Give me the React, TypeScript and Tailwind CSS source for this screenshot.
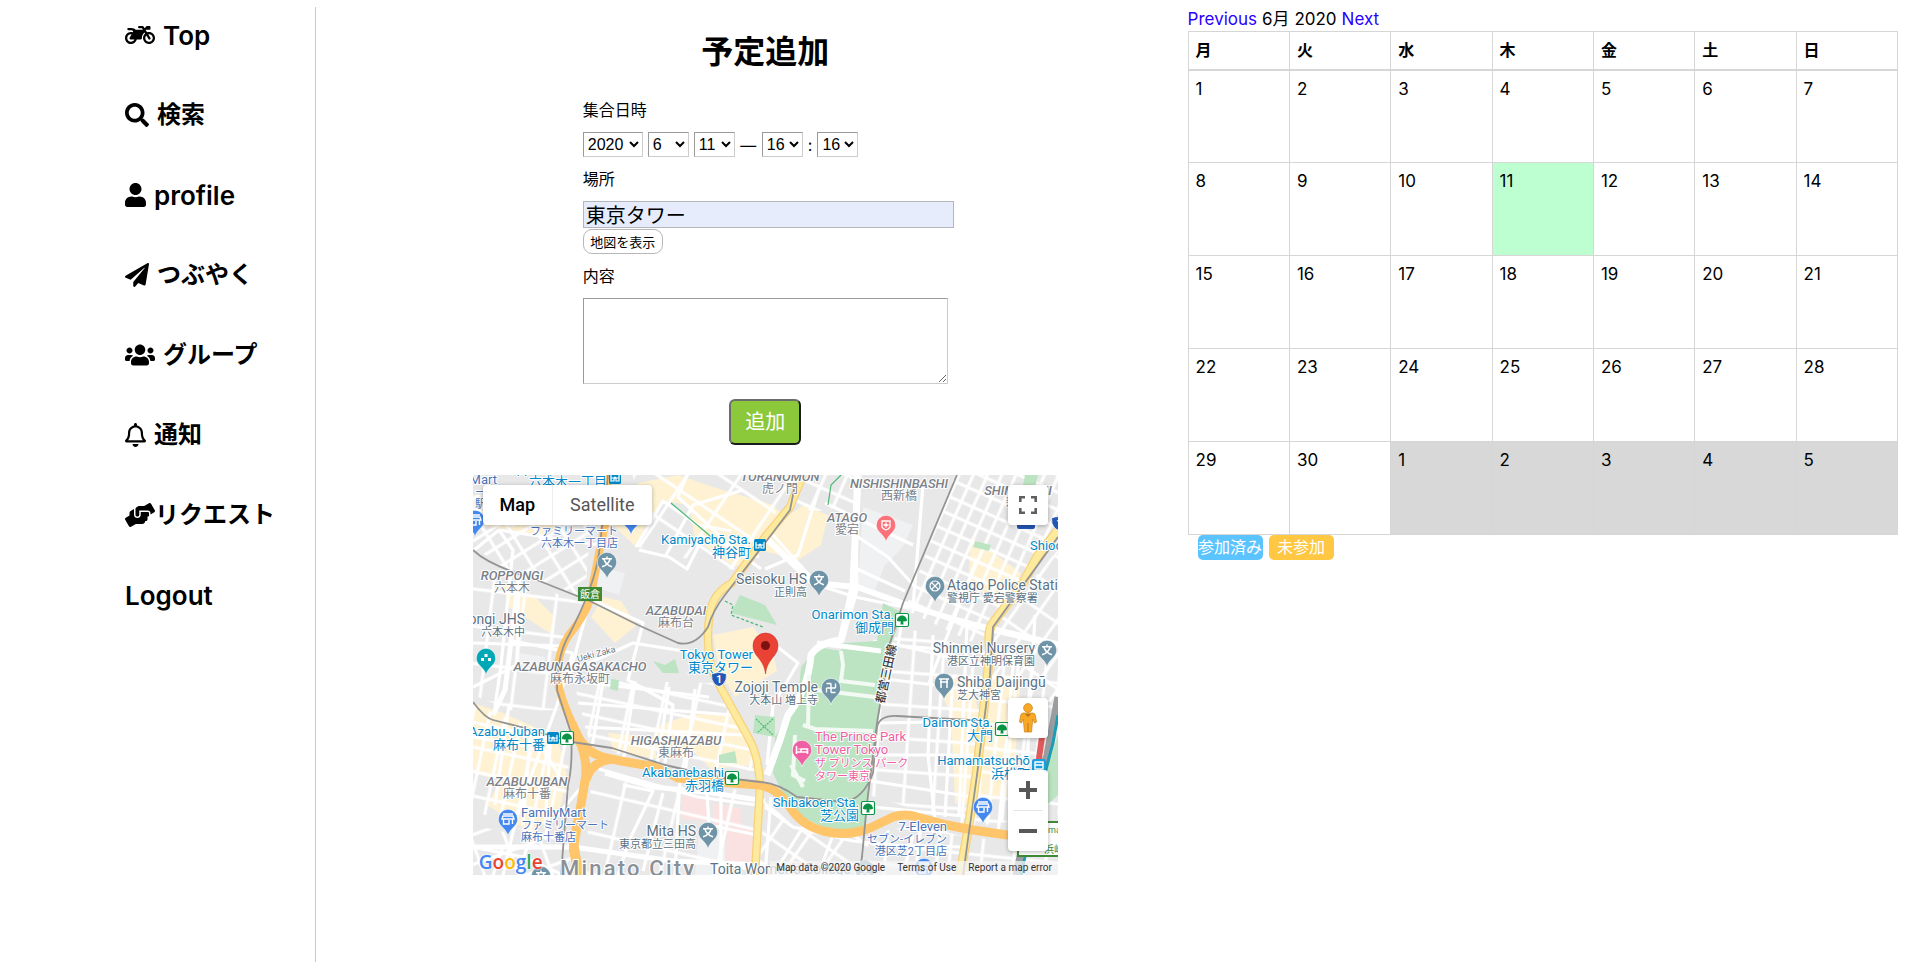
import type { ComponentType, ReactNode } from "react";
import {
  FaMotorcycle,
  FaSearch,
  FaUser,
  FaPaperPlane,
  FaUsers,
  FaRegBell,
  FaHandsHelping,
} from "react-icons/fa";

type NavItem = {
  label: string;
  icon?: ComponentType<{ className?: string }>;
  iconWidth?: string;
  tight?: boolean;
  latin?: boolean;
};

const navItems: NavItem[] = [
  { label: "Top", icon: FaMotorcycle, iconWidth: "w-[30px]", latin: true },
  { label: "検索", icon: FaSearch, iconWidth: "w-[24px]" },
  { label: "profile", icon: FaUser, iconWidth: "w-[21px]", latin: true },
  { label: "つぶやく", icon: FaPaperPlane, iconWidth: "w-[24px]" },
  { label: "グループ", icon: FaUsers, iconWidth: "w-[30px]" },
  { label: "通知", icon: FaRegBell, iconWidth: "w-[21px]" },
  { label: "リクエスト", icon: FaHandsHelping, iconWidth: "w-[30px]", tight: true },
  { label: "Logout", latin: true },
];

function Sidebar() {
  return (
    <nav className="mt-[7px] w-[316px] shrink-0 border-r border-[#cccccc] pl-[125px]">
      <ul>
        {navItems.map(({ label, icon: Icon, iconWidth, tight, latin }) => (
          <li key={label} className="mb-6 h-14">
            <a
              href="#"
              className={`flex h-14 items-center whitespace-nowrap font-semibold text-black ${latin ? "text-[26px]" : "text-2xl"} ${tight ? "gap-0" : "gap-2"}`}
            >
              {Icon && <Icon className={`h-6 shrink-0 ${iconWidth}`} />}
              {label}
            </a>
          </li>
        ))}
      </ul>
    </nav>
  );
}

/* ---------- Form ---------- */

const inset = "border border-t-[#9a9a9a] border-l-[#9a9a9a] border-r-[#cccccc] border-b-[#cccccc]";

function DateSelect({ label, value, wide }: { label: string; value: string; wide?: boolean }) {
  return (
    <select
      aria-label={label}
      defaultValue={value}
      className={`h-[25px] bg-white font-['Liberation_Sans',Arial,sans-serif] text-base text-black ${inset} ${wide ? "w-[60px]" : "w-[41px]"}`}
    >
      <option>{value}</option>
    </select>
  );
}

function ScheduleForm() {
  return (
    <form className="w-[365px] text-base leading-6" onSubmit={(e) => e.preventDefault()}>
      <fieldset>
        <legend className="mb-[10px]">集合日時</legend>
        <div className="flex h-[25px] items-center gap-[5px]">
          <DateSelect label="年" value="2020" wide />
          <DateSelect label="月" value="6" />
          <DateSelect label="日" value="11" />
          <span className="w-[17px] text-center">—</span>
          <DateSelect label="時" value="16" />
          <span>:</span>
          <DateSelect label="分" value="16" />
        </div>
      </fieldset>
      <label htmlFor="place" className="my-[10px] block">
        場所
      </label>
      <input
        id="place"
        type="text"
        defaultValue="東京タワー"
        className="block h-[27px] w-[371px] border border-[#b4b6bd] bg-[#e6ecfc] px-[2px] text-xl leading-6"
      />
      <button
        type="button"
        className="mt-px block h-[25px] w-[80px] rounded-[9px] border border-[#b8b8b8] bg-white text-[13px] leading-5"
      >
        地図を表示
      </button>
      <label htmlFor="content" className="my-[10px] block">
        内容
      </label>
      <textarea id="content" className={`block h-[86px] w-full resize bg-white ${inset}`} />
      <button
        type="submit"
        className="mx-auto mt-[15px] block h-[46px] w-[72px] rounded-md border-2 border-t-[#6c6c6c] border-r-[#1c1c1c] border-b-[#1c1c1c] border-l-[#6c6c6c] bg-[#8bc93b] text-xl text-white"
      >
        追加
      </button>
    </form>
  );
}

/* ---------- Map ---------- */

const mapFont = "Roboto, 'Noto Sans CJK JP', sans-serif";

type Tone = "area" | "station" | "place" | "shop" | "hotel";

const tones: Record<Tone, { color: string; latin: number; kanji: number; leading: number }> = {
  area: { color: "#7b8087", latin: 13, kanji: 12, leading: 12 },
  station: { color: "#0288c7", latin: 13, kanji: 13, leading: 13 },
  place: { color: "#5b7282", latin: 14, kanji: 11, leading: 12 },
  shop: { color: "#4a73b8", latin: 13, kanji: 11, leading: 12 },
  hotel: { color: "#ee5fa3", latin: 13, kanji: 11, leading: 13 },
};

type MapLabelProps = {
  x: number;
  y: number;
  tone: Tone;
  lines: string[];
  anchor?: "start" | "middle" | "end";
};

function MapLabel({ x, y, tone, lines, anchor = "end" }: MapLabelProps) {
  const isArea = tone === "area";
  const { color, latin: latinSize, kanji: kanjiSize, leading } = tones[tone];
  return (
    <g
      fontFamily={mapFont}
      fill={color}
      stroke="#ffffff"
      strokeWidth="2"
      strokeLinejoin="round"
      paintOrder="stroke"
      textAnchor={anchor}
    >
      {lines.map((line, i) => {
        const latin = line.charCodeAt(0) < 0x400 && !/[\u3040-\u9fff]/.test(line);
        return (
          <text
            key={i}
            x={x}
            y={y + i * leading}
            fontSize={latin ? latinSize : kanjiSize}
            fontWeight={isArea && latin ? 500 : 400}
            fontStyle={isArea && latin ? "italic" : "normal"}
          >
            {line}
          </text>
        );
      })}
    </g>
  );
}

function Pin({ x, y, color, children }: { x: number; y: number; color: string; children?: ReactNode }) {
  return (
    <g transform={`translate(${x} ${y})`}>
      <path
        d="M0 17C-1 12.500-3.500 10.500-6.500 7.200C-8.800 4.700-9.700 2.600-9.700 0A9.700 9.700 0 0 1 9.700 0C9.700 2.600 8.800 4.700 6.500 7.200C3.500 10.500 1 12.500 0 17Z"
        fill={color}
        stroke="#fff"
        strokeWidth="0.6"
      />
      {children}
    </g>
  );
}

function SchoolPin({ x, y }: { x: number; y: number }) {
  return (
    <Pin x={x} y={y} color="#6f93a7">
      <path d="M0-5.500v2M-5-3.300H5M-3-2.800C-2 1 1 3.500 5 4.800M3-2.800C2 1-1 3.500-5 4.800" fill="none" stroke="#fff" strokeWidth="1.500" />
    </Pin>
  );
}

function ShopPin({ x, y }: { x: number; y: number }) {
  return (
    <Pin x={x} y={y} color="#4388ee">
      <path d="M-5-5H5M-5-3H5L6 0H-6ZM-4.500 0V5H1V1M4.500 0V5" fill="none" stroke="#fff" strokeWidth="1.400" />
    </Pin>
  );
}

function ToeiMark({ x, y }: { x: number; y: number }) {
  return (
    <g transform={`translate(${x} ${y})`}>
      <rect x="-6.500" y="-6.500" width="13" height="13" rx="1.500" fill="#fff" stroke="#0b9446" strokeWidth="1.200" />
      <path d="M0-4.500C3-4.500 5-2 5 .8C3.500 1.600 2 1.600 1.200 1.200L1.600 4.500H-1.600L-1.200 1.200C-2 1.600-3.500 1.600-5 .8C-5-2-3-4.500 0-4.500Z" fill="#0b9446" />
    </g>
  );
}

function MetroMark({ x, y }: { x: number; y: number }) {
  return (
    <g transform={`translate(${x} ${y})`}>
      <rect x="-6" y="-6" width="12" height="12" rx="1.500" fill="#0288c7" />
      <path d="M-4-3V3H-1V0H-4M4-3V3H1V0H4M-1-1L0 0L1-1" fill="none" stroke="#fff" strokeWidth="1.200" />
    </g>
  );
}

function RouteShield({ x, y }: { x: number; y: number }) {
  return (
    <g transform={`translate(${x} ${y})`}>
      <path d="M-7.500-5Q-4-6.500 0-6.500T7.500-5Q8 1 4.500 5Q2 7 0 7.500Q-2 7-4.500 5Q-8 1-7.500-5Z" fill="#2456b3" stroke="#fff" strokeWidth="0.800" />
      <text y="4" fontSize="10" fontWeight="700" fill="#fff" textAnchor="middle" fontFamily={mapFont}>
        1
      </text>
    </g>
  );
}

const streetGrids = [
  { id: "north-east", points: "350,0 585,0 585,60 520,148 505,170 432,135 482,0", angle: 24, w: 13, h: 16 },
  { id: "north", points: "325,0 380,0 384,28 348,36 318,34", angle: 24, w: 20, h: 22 },
  { id: "east", points: "520,150 585,75 585,230 512,205", angle: 35, w: 20, h: 27 },
  { id: "shiba", points: "424,150 514,178 504,295 492,350 396,320 405,245", angle: 4, w: 30, h: 33 },
  { id: "hamamatsu", points: "518,185 585,190 585,340 497,352", angle: 6, w: 14, h: 24 },
  { id: "roppongi", points: "0,20 120,20 112,122 30,92 0,72", angle: -32, w: 22, h: 18 },
  { id: "torii", points: "160,0 322,0 292,58 260,95 165,72", angle: 34, w: 44, h: 35 },
  { id: "nagasaka", points: "0,88 115,130 84,190 87,235 40,236 0,220", angle: 7, w: 32, h: 37 },
  { id: "juban", points: "0,230 95,266 96,320 85,370 0,335", angle: 12, w: 16, h: 24 },
  { id: "higashi", points: "100,205 240,208 272,262 284,296 205,294 118,272", angle: 12, w: 33, h: 19 },
  { id: "mita", points: "118,305 284,316 282,400 112,400", angle: 13, w: 54, h: 40 },
  { id: "south", points: "292,325 325,355 398,362 386,400 286,400", angle: 35, w: 30, h: 25 },
  { id: "south-east", points: "402,358 440,350 495,362 585,372 585,400 390,400", angle: 6, w: 32, h: 19 },
  { id: "minato", points: "0,350 98,372 98,400 0,400", angle: -20, w: 32, h: 28 },
];

const yellowBlocks = [
  "0,20 48,30 90,50 66,62 40,55 0,50",
  "140,50 165,8 205,0 240,12 300,30 315,45 285,80 262,92 222,64 216,30 190,26 172,52 163,72",
  "130,122 148,126 164,150 142,168 118,142",
  "30,110 60,120 82,142 80,160 36,132",
  "0,228 30,238 84,262 94,300 88,330 60,360 38,345 14,330 28,305 0,298",
  "135,258 180,262 184,284 140,276",
  "216,240 258,238 278,262 280,290 238,294 222,278 180,276 182,252",
  "240,160 280,152 300,178 304,196 262,222 246,196",
  "330,30 355,40 348,70 325,85 290,76 300,52",
  "460,200 500,205 510,270 494,330 482,328 478,240",
  "520,200 548,200 540,320 504,328",
  "498,62 548,98 535,130 495,110",
];

const minorRoads = [
  "M0 34L40 50L84 18L128 25M30 400L44 340L84 230L100 178",
  "M26 55L40 75L28 190L22 232M0 76L26 55L126 70",
  "M166 75L196 82L214 94L230 62L286 82M214 0L205 22L262 75L288 94",
  "M163 72L190 26L225 50L258 56M119 125L170 148L155 205L200 230L192 288",
  "M192 82L220 30L270 15M115 132L96 202M90 200L160 168L236 180",
  "M46 103L44 190L0 212M0 168L90 171M40 166L100 178",
  "M0 262L70 274L92 310M36 230L22 330M58 252L50 350M78 258L72 350",
  "M100 206L236 222M105 228L260 240M112 252L270 260M130 207L118 278M162 206L150 288M196 212L184 290M222 214L212 300",
  "M150 310L180 316L156 366L145 400M190 318L170 396M112 308L80 345M126 294L225 322L284 330",
  "M234 318L236 350L284 360M248 318V400M207 302L202 400",
  "M292 162L325 188L300 230L294 290M300 60L345 110L382 122L440 134M382 0L384 115L370 165L346 170",
  "M352 28L440 70M346 14L325 80L292 94M382 60L415 82L442 112M384 94L432 116",
  "M384 112L440 132L500 148L585 168M504 84L456 208M440 132L450 10M430 140L425 170L512 190M400 166L425 170",
  "M418 170L514 178M412 204L512 216M405 248L512 246M404 280L508 280M398 306L500 322M400 332L500 342",
  "M460 160L455 280L462 345M480 200L472 342M494 150L486 340",
  "M515 200L505 330M542 170L525 360M562 140L550 365",
  "M292 332L320 352L380 366L420 370L490 372M298 322L292 400M330 352L300 400M360 360L345 400M440 360L430 400M468 352L462 400",
  "M0 372L50 382L90 400M30 372L20 400M54 372L46 400",
];

const highway =
  "M135 0L132 50L126 78L117 125Q112 140 96 160Q86 174 84 197Q84 215 99 248Q112 272 113 290Q113 305 107 335Q100 362 100 375L105 400";
const highwayEast =
  "M99 248Q108 276 130 282Q150 287 179 291Q195 298 205 303L245 307L287 310Q304 313 317 332Q328 350 350 356Q375 362 397 353L420 342Q432 338 444 342L474 350L500 355L534 360L585 365M113 305Q118 286 140 284";
const sakurada =
  "M330 0L317 32L292 62L259 108Q240 118 237 138Q232 165 239 195L249 215L275 262Q286 280 287 312L282 400";
const daiichi = "M585 55L564 82L550 108L520 148Q514 155 517 175L514 205L504 295L495 355L487 400";

const railways = [
  "M484 0L430 128L417 168L404 248L394 328L389 382L386 400",
  "M0 75Q15 90 59 103L119 127L165 150L205 168Q222 172 235 152Q240 135 252 120L292 68L317 35L324 0",
  "M135 0L126 78Q122 110 96 160Q84 180 84 215L98 258Q100 290 95 310L88 400",
  "M0 227Q12 243 20 245L52 253L99 267L139 273L192 290L245 302L287 307Q305 308 324 322L370 327Q390 325 400 298L404 252Q407 240 424 241L514 246",
  "M585 62L520 152L517 200L504 300L490 400",
];

function MapCanvas() {
  return (
    <svg
      viewBox="0 0 585 400"
      preserveAspectRatio="xMidYMid slice"
      className="block h-full w-full"
      role="img"
      aria-label="東京タワー周辺の地図"
    >
      <defs>
        {streetGrids.map((g) => (
          <pattern
            key={g.id}
            id={`grid-${g.id}`}
            width={g.w}
            height={g.h}
            patternUnits="userSpaceOnUse"
            patternTransform={`rotate(${g.angle})`}
          >
            <path d={`M0 2H${g.w}M2 0V${g.h}`} stroke="#ffffff" strokeWidth="3" />
          </pattern>
        ))}
      </defs>

      <rect width="585" height="400" fill="#e8e8e9" />
      <g fill="#fef2d3">
        {yellowBlocks.map((p) => (
          <polygon key={p} points={p} />
        ))}
      </g>
      <g fill="#f0f1f3">
        <polygon points="390,32 440,50 430,72 412,90 400,120 385,112" />
        <polygon points="126,92 152,98 146,120 122,112" />
        <polygon points="46,178 72,182 72,200 46,198" />
        <polygon points="226,358 252,358 252,400 222,400" />
      </g>
      <g fill="#fbe2e2">
        <polygon points="210,320 234,322 234,346 208,344" />
        <polygon points="240,328 268,334 268,352 240,350" />
        <polygon points="254,352 284,352 282,392 252,392" />
      </g>

      {streetGrids.map((g) => (
        <polygon key={g.id} points={g.points} fill={`url(#grid-${g.id})`} />
      ))}
      <g fill="none" stroke="#ffffff" strokeWidth="3.200" strokeLinejoin="round">
        {minorRoads.map((d) => (
          <path key={d} d={d} />
        ))}
      </g>
      <g fill="#bce4c2">
        <polygon points="410,128 430,138 418,170 414,200 405,245 398,300 392,358 350,352 318,336 300,298 302,262 325,225 328,192 344,172 368,176 370,168 404,166" />
        <polygon points="267,120 292,130 304,150 258,138" />
        <polygon points="180,186 192,190 202,184 206,198 190,198" />
        <polygon points="282,240 302,242 302,262 280,258" />
        <polygon points="246,280 262,276 264,288 246,288" />
        <polygon points="138,204 146,205 145,216 137,214" />
        <polygon points="502,66 518,70 516,76 500,72" />
        <polygon points="552,0 565,0 562,12 550,10" />
        <polygon points="572,300 585,260 585,320 574,330" />
      </g>
      <g fill="none" stroke="#ffffff" strokeLinejoin="round">
        <path d="M385 0L380 112L368 165Q345 168 338 180Q335 215 315 240Q306 270 294 300" strokeWidth="7" />
        <path d="M344 168L408 176" strokeWidth="5" />
        <path d="M292 62L340 108L384 112L440 132L500 150L585 170" strokeWidth="6" />
        <path d="M132 298L180 312L240 318L292 326M0 372L100 372L200 386L290 390" strokeWidth="5" />
        <path d="M46 103L32 215L20 240" strokeWidth="5" />
      </g>
      <g fill="none" stroke="#f3faf4" strokeWidth="4">
        <path d="M368 176L370 190L368 206L402 210M335 214L402 222M330 250L342 254L400 256M336 200L335 252M318 290L330 312M322 260L320 300L332 306" />
      </g>
      <g fill="none" stroke="#4cb973" strokeWidth="1.200">
        <path d="M198 28L236 60L248 74" />
        <path d="M368 0L358 10L355 30" />
        <path d="M252 126L260 130L258 140L290 152" strokeDasharray="3 2" />
        <path d="M283 244L300 260M300 244L284 258" strokeDasharray="2 1" />
      </g>

      <g fill="none" strokeLinejoin="round">
        <g stroke="#f7d17c" strokeWidth="8.500">
          <path d={sakurada} />
          <path d={daiichi} strokeWidth="9.500" />
        </g>
        <g stroke="#fdea9c" strokeWidth="6">
          <path d={sakurada} />
          <path d={daiichi} strokeWidth="7" />
        </g>
        <path d={highway} stroke="#fec56b" strokeWidth="8" />
        <path d={highwayEast} stroke="#fec56b" strokeWidth="9" />
        <path d="M100 255Q114 275 113 300L101 370L106 400" stroke="#fec56b" strokeWidth="9" />
        <g stroke="#949494" strokeWidth="1.800">
          {railways.map((d) => (
            <path key={d} d={d} />
          ))}
        </g>
        <path d="M585 222L574 280L556 340L543 400" stroke="#9a9da0" strokeWidth="7" />
        <path d="M585 240L580 268L561 340L548 400" stroke="#1c9bb4" strokeWidth="3" />
        <path d="M569 262L565 290" stroke="#e05b5b" strokeWidth="6" />
      </g>

      <MapLabel x={24} y={9} tone="shop" anchor="end" lines={["Mart", "ート", "駅前"]} />
      <MapLabel x={134} y={-2} tone="station" lines={["Roppongi-itchome", "六本木一丁目"]} />
      <MapLabel x={145} y={60} tone="shop" lines={["ファミリーマート", "六本木一丁目店"]} />
      <MapLabel x={39} y={105} tone="area" anchor="middle" lines={["ROPPONGI", "六本木"]} />
      <MapLabel x={52} y={149} tone="place" lines={["Roppongi JHS", "六本木中"]} />
      <MapLabel x={107} y={196} tone="area" anchor="middle" lines={["AZABUNAGASAKACHO", "麻布永坂町"]} />
      <MapLabel x={203} y={140} tone="area" anchor="middle" lines={["AZABUDAI", "麻布台"]} />
      <MapLabel x={307} y={6} tone="area" anchor="middle" lines={["TORANOMON", "虎ノ門"]} />
      <MapLabel x={278} y={69} tone="station" lines={["Kamiyachō Sta.", "神谷町"]} />
      <MapLabel x={334} y={109} tone="place" lines={["Seisoku HS", "正則高"]} />
      <MapLabel x={426} y={13} tone="area" anchor="middle" lines={["NISHISHINBASHI", "西新橋"]} />
      <MapLabel x={374} y={47} tone="area" anchor="middle" lines={["ATAGO", "愛宕"]} />
      <MapLabel x={545} y={20} tone="area" anchor="middle" lines={["SHIMBASHI", "新橋"]} />
      <MapLabel x={421} y={144} tone="station" lines={["Onarimon Sta.", "御成門"]} />
      <MapLabel x={474} y={115} tone="place" anchor="start" lines={["Atago Police Station", "警視庁 愛宕警察署"]} />
      <MapLabel x={557} y={75} tone="station" anchor="start" lines={["Shiodome"]} />
      <MapLabel x={562} y={178} tone="place" lines={["Shinmei Nursery", "港区立神明保育園"]} />
      <MapLabel x={280} y={184} tone="station" lines={["Tokyo Tower", "東京タワー"]} />
      <MapLabel x={345} y={217} tone="place" lines={["Zojoji Temple", "大本山 増上寺"]} />
      <MapLabel x={484} y={212} tone="place" anchor="start" lines={["Shiba Daijingū", "芝大神宮"]} />
      <MapLabel x={72} y={261} tone="station" lines={["Azabu-Juban", "麻布十番"]} />
      <MapLabel x={54} y={311} tone="area" anchor="middle" lines={["AZABUJUBAN", "麻布十番"]} />
      <MapLabel x={203} y={270} tone="area" anchor="middle" lines={["HIGASHIAZABU", "東麻布"]} />
      <MapLabel x={251} y={302} tone="station" lines={["Akabanebashi", "赤羽橋"]} />
      <MapLabel x={342} y={266} tone="hotel" anchor="start" lines={["The Prince Park", "Tower Tokyo", "ザ プリンス パーク", "タワー東京"]} />
      <MapLabel x={520} y={252} tone="station" lines={["Daimon Sta.", "大門"]} />
      <MapLabel x={557} y={290} tone="station" lines={["Hamamatsuchō", "浜松町"]} />
      <MapLabel x={386} y={332} tone="station" lines={["Shibakoen Sta.", "芝公園"]} />
      <MapLabel x={474} y={356} tone="shop" lines={["7-Eleven", "セブン-イレブン", "港区芝2丁目店"]} />
      <MapLabel x={48} y={342} tone="shop" anchor="start" lines={["FamilyMart", "ファミリーマート", "麻布十番店"]} />
      <MapLabel x={223} y={361} tone="place" lines={["Mita HS", "東京都立三田高"]} />
      <MapLabel x={237} y={399} tone="place" anchor="start" lines={["Toita Women's College"]} />

      <g fontFamily={mapFont} stroke="#fff" strokeWidth="2" paintOrder="stroke">
        <text x="87" y="401" fontSize="22" fontWeight="500" className="tracking-widest" fill="#8b9096">
          Minato City
        </text>
        <text transform="translate(105 187) rotate(-15)" fontSize="9" fill="#6f757b">
          Ueki Zaka
        </text>
        <text transform="translate(411 229) rotate(-78)" fontSize="12" fontWeight="500" fill="#3c4043">
          都営三田線
        </text>
      </g>

      <g fontFamily={mapFont}>
        <rect x="105" y="112" width="24" height="14" fill="#3f8b35" />
        <text x="117" y="123" fontSize="10" fill="#fff" textAnchor="middle">
          飯倉
        </text>
        <rect x="545" y="347" width="50" height="34" fill="#fff" stroke="#3f8b35" strokeWidth="2" />
        <text x="575" y="358" fontSize="9" fill="#3f8b35">
          ma
        </text>
        <text x="571" y="378" fontSize="10" fill="#3f8b35">
          浜崎
        </text>
      </g>

      <MetroMark x={142} y={3} />
      <MetroMark x={287} y={70} />
      <MetroMark x={80} y={263} />
      <ToeiMark x={94} y={263} />
      <ToeiMark x={429} y={145} />
      <ToeiMark x={259} y={303} />
      <ToeiMark x={395} y={333} />
      <ToeiMark x={529} y={254} />
      <RouteShield x={246} y={204} />
      <RouteShield x={586} y={48} />
      <rect x="544" y="45" width="18" height="9" rx="2" fill="#2456b3" />
      <g transform="translate(566 291)">
        <rect x="-7" y="-7" width="14" height="14" rx="2" fill="#1aa0e0" />
        <path d="M-4-4H4V3H-4ZM-4-1H4M-3 6L-1 3M3 6L1 3" fill="none" stroke="#fff" strokeWidth="1.400" />
      </g>

      <SchoolPin x={134} y={87} />
      <SchoolPin x={346} y={105} />
      <SchoolPin x={574} y={175} />
      <SchoolPin x={235} y={357} />
      <SchoolPin x={68} y={401} />
      <SchoolPin x={392} y={395} />
      <ShopPin x={2} y={45} />
      <ShopPin x={158} y={43} />
      <ShopPin x={35} y={344} />
      <ShopPin x={510} y={332} />
      <ShopPin x={451} y={393} />
      <Pin x={13} y={183} color="#00a8b5">
        <path d="M-1.500-4h3v3h-3zM-5 0h3v3h-3zM2 0h3v3h-3z" fill="#fff" />
      </Pin>
      <Pin x={413} y={50} color="#fa7179">
        <path d="M-4-4H4V2Q3 4 0 5Q-3 4-4 2ZM0-2.500V2.500M-2.500 0H2.500" fill="none" stroke="#fff" strokeWidth="1.300" />
      </Pin>
      <Pin x={462} y={111} color="#6f93a7">
        <path d="M-3-3L3 3M3-3L-3 3M5 0A5 5 0 1 1-5 0A5 5 0 1 1 5 0" fill="none" stroke="#fff" strokeWidth="1.200" />
      </Pin>
      <Pin x={358} y={213} color="#6f93a7">
        <path d="M0-4.500V4.500M-4.500 0H4.500M0-4.500H4.500M0 4.500H-4.500M-4.500 0V-4.500M4.500 0V4.500" fill="none" stroke="#fff" strokeWidth="1.400" transform="scale(-1 1)" />
      </Pin>
      <Pin x={471} y={208} color="#6f93a7">
        <path d="M-5-4H5M-4-1H4M-3-4V5M3-4V5" fill="none" stroke="#fff" strokeWidth="1.500" />
      </Pin>
      <Pin x={329} y={275} color="#ee5fa3">
        <path d="M-5.500-4V4M-5.500 2H5.500M5.500 4V-1H-1V2M-3.500-1H-2.500" fill="none" stroke="#fff" strokeWidth="1.600" />
      </Pin>

      <path
        d="M292.500 199C291.500 190 288 186 284 181C281 177 280 174.500 280 170.500A12.500 12.500 0 0 1 305 170.500C305 174.500 304 177 301 181C297 186 293.500 190 292.500 199Z"
        fill="#ea4335"
        stroke="#c5221f"
        strokeWidth="0.500"
      />
      <circle cx="292.500" cy="170.500" r="4.500" fill="#7d1210" />
    </svg>
  );
}

const controlBox = "bg-white shadow-[0_1px_4px_rgba(0,0,0,0.3)]";

function MapPanel() {
  return (
    <section
      aria-label="地図"
      className="relative mt-[30px] h-[400px] w-[585px] overflow-hidden font-[Roboto,'Noto_Sans_CJK_JP',sans-serif]"
    >
      <MapCanvas />
      <div className={`absolute left-[10px] top-[10px] flex h-10 rounded-sm text-lg ${controlBox}`}>
        <button type="button" className="w-[69px] font-medium text-black">
          Map
        </button>
        <button type="button" className="w-[100px] border-l border-[#eeeeee] text-[#565656]">
          Satellite
        </button>
      </div>
      <button
        type="button"
        aria-label="全画面表示"
        className={`absolute right-[10px] top-[10px] flex size-10 items-center justify-center rounded-sm ${controlBox}`}
      >
        <svg viewBox="0 0 18 18" className="size-[18px]" fill="none" stroke="#606060" strokeWidth="2.600">
          <path d="M1.300 6V1.300H6M12 1.300H16.700V6M16.700 12V16.700H12M6 16.700H1.300V12" />
        </svg>
      </button>
      <button
        type="button"
        aria-label="ストリートビュー"
        className={`absolute right-[10px] top-[223px] flex size-10 items-center justify-center rounded-sm ${controlBox}`}
      >
        <svg viewBox="0 0 18 30" className="h-[30px] w-[18px]">
          <path d="M4 10H14Q16 10 16.500 13L17.500 19L15.500 20L13.800 16L12.500 29H5.500L4.200 16L2.500 20L.5 19L1.500 13Q2 10 4 10Z" fill="#f9a825" stroke="#c98216" strokeWidth="0.700" />
          <path d="M6 11L9 14L12 11ZM8.500 20H9.500V29H8.500Z" fill="#b9761a" />
          <circle cx="9" cy="5" r="4.400" fill="#f9a825" stroke="#c98216" strokeWidth="0.700" />
        </svg>
      </button>
      <div className={`absolute right-[10px] top-[295px] flex w-10 flex-col items-center rounded-sm ${controlBox}`}>
        <button type="button" aria-label="拡大" className="flex size-10 items-center justify-center">
          <svg viewBox="0 0 18 18" className="size-[18px]" stroke="#585858" strokeWidth="4">
            <path d="M9 0V18M0 9H18" />
          </svg>
        </button>
        <span className="h-px w-[30px] bg-[#e6e6e6]" />
        <button type="button" aria-label="縮小" className="flex size-10 items-center justify-center">
          <svg viewBox="0 0 18 18" className="size-[18px]" stroke="#585858" strokeWidth="4">
            <path d="M0 9H18" />
          </svg>
        </button>
      </div>
      <a
        href="#"
        className="absolute bottom-[1px] left-[6px] font-['Open_Sans',sans-serif] text-[19px] font-semibold leading-6 [text-shadow:0_0_2px_#fff,0_0_2px_#fff]"
      >
        <span className="text-[#4285f4]">G</span>
        <span className="text-[#ea4335]">o</span>
        <span className="text-[#fbbc04]">o</span>
        <span className="text-[#4285f4]">g</span>
        <span className="text-[#34a853]">l</span>
        <span className="text-[#ea4335]">e</span>
      </a>
      <div className="absolute bottom-0 right-0 flex h-[14px] items-center gap-3 bg-[#f5f5f5]/75 px-[6px] text-[10px] leading-3 text-[#333333]">
        <span>Map data ©2020 Google</span>
        <a href="#">Terms of Use</a>
        <a href="#">Report a map error</a>
      </div>
    </section>
  );
}

/* ---------- Calendar ---------- */

const weekdays = ["月", "火", "水", "木", "金", "土", "日"];
const weeks = Array.from({ length: 5 }, (_, w) => Array.from({ length: 7 }, (_, d) => w * 7 + d + 1));
const today = 11;
const daysInMonth = 30;

function cellColor(day: number) {
  if (day > daysInMonth) return "bg-[#d8d8d8]";
  if (day === today) return "bg-[#bdffd0]";
  return "bg-white";
}

function Calendar() {
  return (
    <section className="mr-[22px] w-[37%] shrink-0 pt-[7px] text-base leading-6">
      <div className="flex gap-[5px] text-[17px] leading-6">
        <a href="#" className="text-[#2a00ff]">
          Previous
        </a>
        <span>6月 2020</span>
        <a href="#" className="text-[#2a00ff]">
          Next
        </a>
      </div>
      <table className="w-full table-fixed border-collapse">
        <thead>
          <tr>
            {weekdays.map((d) => (
              <th key={d} scope="col" className="h-[38px] border border-b-2 border-[#d6d6d6] px-[7px] text-left font-bold">
                {d}
              </th>
            ))}
          </tr>
        </thead>
        <tbody>
          {weeks.map((week) => (
            <tr key={week[0]}>
              {week.map((day) => (
                <td
                  key={day}
                  className={`h-[93px] border border-[#d6d6d6] px-[7px] py-[6px] align-top text-[17px] leading-6 ${cellColor(day)}`}
                >
                  {day > daysInMonth ? day - daysInMonth : day}
                </td>
              ))}
            </tr>
          ))}
        </tbody>
      </table>
      <div className="flex gap-[6px] pl-[10px] text-center text-white">
        <span className="h-[25px] w-[65px] whitespace-nowrap rounded-[5px] bg-[#5bc4ff]">参加済み</span>
        <span className="h-[25px] w-[65px] whitespace-nowrap rounded-[5px] bg-[#ffc742]">未参加</span>
      </div>
    </section>
  );
}

export default function App() {
  return (
    <div className="flex min-h-screen bg-white font-[Inter,'Noto_Sans_CJK_JP',sans-serif] text-black">
      <Sidebar />
      <main className="ml-[27px] flex flex-1 flex-col items-center pt-9">
        <h1 className="mb-[30px] text-[32px] font-bold leading-8">予定追加</h1>
        <ScheduleForm />
        <MapPanel />
      </main>
      <Calendar />
    </div>
  );
}
